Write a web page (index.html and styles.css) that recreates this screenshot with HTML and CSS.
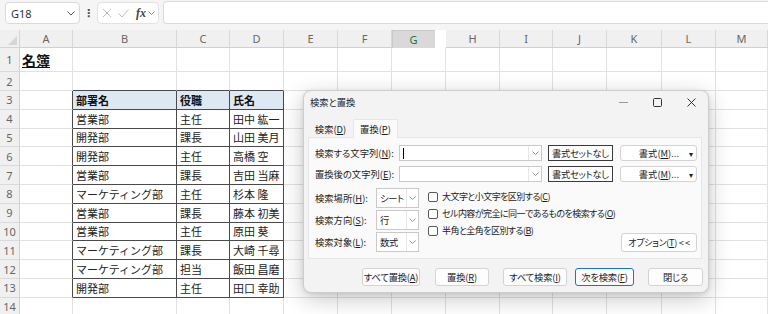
FILE: index.html
```html
<!DOCTYPE html>
<html lang="ja">
<head>
<meta charset="utf-8">
<title>検索と置換</title>
<link rel="stylesheet" href="styles.css">
</head>
<body>
<div class="app">
  <div class="fbar">
    <div class="namebox"><span>G18</span><svg class="chev" width="8" height="5" viewBox="0 0 8 5"><path d="M0.5 0.5L4 4L7.5 0.5" fill="none" stroke="#555" stroke-width="1"/></svg></div>
    <div class="dots">⋮</div>
    <div class="fxbox">
      <svg width="10" height="10" viewBox="0 0 10 10"><path d="M1 1L9 9M9 1L1 9" stroke="#bdbdbd" stroke-width="1" fill="none"/></svg>
      <svg width="11" height="9" viewBox="0 0 11 9"><path d="M0.5 4.5L4 8L10.5 0.5" stroke="#bdbdbd" stroke-width="1" fill="none"/></svg>
      <span class="fx">fx</span>
      <svg width="7" height="5" viewBox="0 0 7 5"><path d="M0.5 0.5L3.5 3.5L6.5 0.5" fill="none" stroke="#888" stroke-width="1"/></svg>
    </div>
    <div class="finput"></div>
  </div>

  <div class="sheet">
    <div class="corner"><svg width="9" height="9" viewBox="0 0 9 9"><path d="M9 0V9H0Z" fill="#d6d6d6"/></svg></div>
    <div class="ch">A</div><div class="ch">B</div><div class="ch">C</div><div class="ch">D</div><div class="ch">E</div><div class="ch">F</div><div class="ch sel">G</div><div class="ch">H</div><div class="ch">I</div><div class="ch">J</div><div class="ch">K</div><div class="ch">L</div><div class="ch">M</div>

    <div class="rh">1</div><div class="ttl">名簿</div><div></div><div></div><div></div><div></div><div></div><div></div><div></div><div></div><div></div><div></div><div></div><div></div>

    <div class="rh">2</div><div></div><div class="tt"></div><div class="tt"></div><div class="tt"></div><div></div><div></div><div></div><div></div><div></div><div></div><div></div><div></div><div></div>

    <div class="rh">3</div><div class="tl"></div><div class="t h">部署名</div><div class="t h">役職</div><div class="t h">氏名</div><div></div><div></div><div></div><div></div><div></div><div></div><div></div><div></div><div></div>

    <div class="rh">4</div><div class="tl"></div><div class="t">営業部</div><div class="t">主任</div><div class="t">田中 紘一</div><div></div><div></div><div></div><div></div><div></div><div></div><div></div><div></div><div></div>

    <div class="rh">5</div><div class="tl"></div><div class="t">開発部</div><div class="t">課長</div><div class="t">山田 美月</div><div></div><div></div><div></div><div></div><div></div><div></div><div></div><div></div><div></div>

    <div class="rh">6</div><div class="tl"></div><div class="t">開発部</div><div class="t">主任</div><div class="t">高橋 空</div><div></div><div></div><div></div><div></div><div></div><div></div><div></div><div></div><div></div>

    <div class="rh">7</div><div class="tl"></div><div class="t">営業部</div><div class="t">課長</div><div class="t">吉田 当麻</div><div></div><div></div><div></div><div></div><div></div><div></div><div></div><div></div><div></div>

    <div class="rh">8</div><div class="tl"></div><div class="t">マーケティング部</div><div class="t">主任</div><div class="t">杉本 隆</div><div></div><div></div><div></div><div></div><div></div><div></div><div></div><div></div><div></div>

    <div class="rh">9</div><div class="tl"></div><div class="t">営業部</div><div class="t">課長</div><div class="t">藤本 初美</div><div></div><div></div><div></div><div></div><div></div><div></div><div></div><div></div><div></div>

    <div class="rh">10</div><div class="tl"></div><div class="t">営業部</div><div class="t">主任</div><div class="t">原田 葵</div><div></div><div></div><div></div><div></div><div></div><div></div><div></div><div></div><div></div>

    <div class="rh">11</div><div class="tl"></div><div class="t">マーケティング部</div><div class="t">課長</div><div class="t">大崎 千尋</div><div></div><div></div><div></div><div></div><div></div><div></div><div></div><div></div><div></div>

    <div class="rh">12</div><div class="tl"></div><div class="t">マーケティング部</div><div class="t">担当</div><div class="t">飯田 昌磨</div><div></div><div></div><div></div><div></div><div></div><div></div><div></div><div></div><div></div>

    <div class="rh">13</div><div class="tl"></div><div class="t">開発部</div><div class="t">主任</div><div class="t">田口 幸助</div><div></div><div></div><div></div><div></div><div></div><div></div><div></div><div></div><div></div>

    <div class="rh">14</div><div></div><div></div><div></div><div></div><div></div><div></div><div></div><div></div><div></div><div></div><div></div><div></div><div></div>
  </div>

  <div class="dialog">
    <div class="titlebar">
      <span class="dtitle">検索と置換</span>
      <div class="winbtn"><svg width="9" height="1" viewBox="0 0 9 1"><rect width="9" height="1" fill="#9a9a9a"/></svg></div>
      <div class="winbtn"><svg width="9" height="9" viewBox="0 0 9 9"><rect x="0.5" y="0.5" width="8" height="8" rx="1" fill="none" stroke="#333" stroke-width="1"/></svg></div>
      <div class="winbtn"><svg width="9" height="9" viewBox="0 0 9 9"><path d="M0.5 0.5L8.5 8.5M8.5 0.5L0.5 8.5" stroke="#333" stroke-width="1" fill="none"/></svg></div>
    </div>
    <div class="tabs">
      <div class="tab">検索(<u>D</u>)</div>
      <div class="tab active">置換(<u>P</u>)</div>
    </div>
    <div class="panel">
      <div class="frow">
        <span class="flabel">検索する文字列(<u>N</u>):</span>
        <div class="combo"><span class="caret"></span><span class="drop"><svg width="7" height="4" viewBox="0 0 7 4"><path d="M0.5 0.5L3.5 3.5L6.5 0.5" fill="none" stroke="#999" stroke-width="1"/></svg></span></div>
        <div class="nofmt">書式セットなし</div>
        <div class="fmt"><span>書式(<u>M</u>)...</span><span class="tri">▾</span></div>
      </div>
      <div class="frow r2">
        <span class="flabel">置換後の文字列(<u>E</u>):</span>
        <div class="combo"><span class="ctext"></span><span class="drop"><svg width="7" height="4" viewBox="0 0 7 4"><path d="M0.5 0.5L3.5 3.5L6.5 0.5" fill="none" stroke="#999" stroke-width="1"/></svg></span></div>
        <div class="nofmt">書式セットなし</div>
        <div class="fmt"><span>書式(<u>M</u>)...</span><span class="tri">▾</span></div>
      </div>
      <div class="lower">
        <div class="selcol">
          <div class="srow"><span class="slabel">検索場所(<u>H</u>):</span><div class="sel"><span class="stext">シート</span><span class="drop"><svg width="7" height="4" viewBox="0 0 7 4"><path d="M0.5 0.5L3.5 3.5L6.5 0.5" fill="none" stroke="#999" stroke-width="1"/></svg></span></div></div>
          <div class="srow"><span class="slabel">検索方向(<u>S</u>):</span><div class="sel"><span class="stext">行</span><span class="drop"><svg width="7" height="4" viewBox="0 0 7 4"><path d="M0.5 0.5L3.5 3.5L6.5 0.5" fill="none" stroke="#999" stroke-width="1"/></svg></span></div></div>
          <div class="srow"><span class="slabel">検索対象(<u>L</u>):</span><div class="sel"><span class="stext">数式</span><span class="drop"><svg width="7" height="4" viewBox="0 0 7 4"><path d="M0.5 0.5L3.5 3.5L6.5 0.5" fill="none" stroke="#999" stroke-width="1"/></svg></span></div></div>
        </div>
        <div class="checks">
          <label class="chk"><span class="box"></span>大文字と小文字を区別する(<u>C</u>)</label>
          <label class="chk"><span class="box"></span>セル内容が完全に同一であるものを検索する(<u>O</u>)</label>
          <label class="chk"><span class="box"></span>半角と全角を区別する(<u>B</u>)</label>
        </div>
        <div class="optbtn">オプション(<u>T</u>)&nbsp;&lt;&nbsp;&lt;</div>
      </div>
    </div>
    <div class="actions">
      <div class="btn b1">すべて置換(<u>A</u>)</div>
      <div class="btn b2">置換(<u>R</u>)</div>
      <div class="btn b3">すべて検索(<u>I</u>)</div>
      <div class="btn b4 focus">次を検索(<u>F</u>)</div>
      <div class="btn b5">閉じる</div>
    </div>
  </div>
</div>
</body>
</html>
```

FILE: styles.css
```css
* { box-sizing: border-box; margin: 0; padding: 0; }

body {
  width: 768px;
  height: 314px;
  overflow: hidden;
  background: #f5f5f5;
  font-family: "Noto Sans CJK JP", "Noto Sans", sans-serif;
  color: #222;
}

.app {
  position: relative;
  width: 768px;
  height: 314px;
  overflow: hidden;
}

/* formula bar */
.fbar {
  height: 30px;
  display: flex;
  align-items: flex-start;
  padding: 2px 0 0 5px;
  background: #f5f5f5;
}
.namebox {
  width: 75px;
  height: 22px;
  background: #fff;
  border: 1px solid #dadada;
  border-radius: 4px;
  display: flex;
  align-items: center;
  justify-content: space-between;
  padding: 0 4px 0 5px;
  font: 11px "Noto Sans", sans-serif;
  color: #333;
}
.dots {
  width: 17px;
  height: 22px;
  display: flex;
  align-items: center;
  justify-content: center;
  font: bold 11px "DejaVu Sans", sans-serif;
  color: #555;
}
.fxbox {
  width: 62px;
  height: 22px;
  background: #fff;
  border: 1px solid #e2e2e2;
  border-radius: 4px;
  display: flex;
  align-items: center;
  padding-left: 4px;
  gap: 6px;
}
.fx {
  font: italic bold 12px "Liberation Serif", serif;
  color: #444;
  margin-left: 1px;
  margin-right: -4px;
}
.finput {
  flex: 1;
  height: 23px;
  margin-left: 4px;
  margin-top: -1px;
  background: #fff;
  border: 1px solid #dadada;
  border-right: none;
  border-radius: 4px 0 0 4px;
}

/* sheet */
.sheet {
  display: grid;
  grid-template-columns: 20px 53px 104px 53px 54px 54px 54px 54px 54px 53px 54px 55px 54px 52px;
  grid-template-rows: 18px 24px 19px repeat(12, 18.8px);
  background: #fff;
}
.sheet > div {
  border-right: 1px solid #e1e1e1;
  border-bottom: 1px solid #e1e1e1;
  background: #fff;
  font-size: 11px;
  display: flex;
  align-items: center;
  padding-left: 3px;
  white-space: nowrap;
  color: #222;
}
.sheet > .corner {
  background: #f0f0f0;
  align-items: flex-end;
  justify-content: flex-end;
  padding: 0 2px 2px 0;
  border-right-color: #d4d4d4;
  border-bottom-color: #d4d4d4;
}
.sheet > .ch {
  background: #f0f0f0;
  justify-content: center;
  padding: 0;
  font: 11px "Noto Sans", sans-serif;
  color: #666;
  border-right-color: #d8d8d8;
  border-bottom-color: #d0d0d0;
}
.sheet > .ch.sel {
  background: #d9d9d9;
  color: #217346;
  border-bottom: 2px solid #217346;
}
.sheet > .rh {
  background: #f0f0f0;
  justify-content: center;
  padding: 0;
  font: 11px "Noto Sans", sans-serif;
  color: #666;
  border-right-color: #d0d0d0;
  border-bottom-color: #dadada;
}
.sheet > .ttl {
  font-size: 14px;
  font-weight: bold;
  text-decoration: underline;
  color: #111;
  padding-left: 2px;
  overflow: visible;
}
.sheet > .tt { border-bottom-color: #4a4a4a; }
.sheet > .tl { border-right-color: #4a4a4a; }
.sheet > .t {
  border-right-color: #4a4a4a;
  border-bottom-color: #4a4a4a;
}
.sheet > .h {
  background: #dde8f3;
  font-weight: bold;
  color: #111;
}

/* dialog */
.dialog {
  position: absolute;
  left: 303px;
  top: 90px;
  width: 406px;
  height: 203px;
  background: #f3f3f3;
  border: 1px solid #cdcdcd;
  border-radius: 8px;
  box-shadow: 0 6px 22px rgba(0, 0, 0, 0.22), 0 1px 4px rgba(0, 0, 0, 0.1);
  font-size: 9.3px;
  font-feature-settings: "palt";
  color: #1b1b1b;
  display: flex;
  flex-direction: column;
}
.titlebar {
  height: 22px;
  display: flex;
  align-items: center;
  padding-left: 6px;
}
.dtitle { flex: 1; }
.winbtn {
  width: 34px;
  height: 22px;
  display: flex;
  align-items: center;
  justify-content: center;
}
.tabs {
  margin-top: 6px;
  padding-left: 4px;
  height: 18px;
  display: flex;
  align-items: flex-end;
}
.tab {
  width: 45px;
  height: 17px;
  display: flex;
  align-items: center;
  justify-content: center;
}
.tab.active {
  height: 19px;
  background: #fafafa;
  border: 1px solid #e6e6e6;
  border-bottom: none;
  border-radius: 2px 2px 0 0;
  position: relative;
  z-index: 1;
  margin-bottom: -1px;
}
.panel {
  margin: 0 6px 0 4px;
  height: 122px;
  background: #fafafa;
  border: 1px solid #e6e6e6;
  padding: 7px 4px 0 6px;
}
.frow {
  height: 16px;
  display: flex;
  align-items: center;
}
.frow.r2 { margin-top: 5px; }
.flabel { width: 84px; white-space: nowrap; }
.combo {
  width: 143px;
  height: 16px;
  background: #fff;
  border: 1px solid #c9c9c9;
  display: flex;
  align-items: center;
}
.caret {
  width: 1px;
  height: 11px;
  background: #000;
  margin-left: 3px;
}
.ctext { flex: 1; }
.combo .caret { margin-right: auto; }
.drop {
  width: 13px;
  height: 100%;
  flex-shrink: 0;
  border-left: 1px solid #e6e6e6;
  display: flex;
  align-items: center;
  justify-content: center;
}
.nofmt {
  width: 65px;
  height: 16px;
  margin-left: 6px;
  border: 1.5px solid #3a3a3a;
  background: #fdfdfd;
  display: flex;
  align-items: center;
  justify-content: center;
  white-space: nowrap;
  letter-spacing: -0.3px;
}
.fmt {
  width: 77px;
  height: 16px;
  margin-left: 7px;
  border: 1px solid #d3d3d3;
  border-radius: 3px;
  background: #fff;
  display: flex;
  align-items: center;
  justify-content: flex-end;
  padding-right: 3px;
  white-space: nowrap;
}
.fmt .tri { margin-left: 10px; font-size: 8px; color: #222; }

.lower {
  margin-top: 6px;
  display: flex;
}
.selcol {
  display: flex;
  flex-direction: column;
  gap: 2px;
  flex-shrink: 0;
}
.srow {
  height: 20px;
  display: flex;
  align-items: center;
}
.slabel { width: 61px; white-space: nowrap; }
.sel {
  width: 43px;
  height: 20px;
  background: #fff;
  border: 1px solid #c9c9c9;
  display: flex;
  align-items: center;
}
.stext {
  flex: 1;
  padding-left: 3px;
  white-space: nowrap;
  overflow: hidden;
  letter-spacing: -0.3px;
}
.sel .drop { width: 12px; }
.checks {
  margin-left: 9px;
  display: flex;
  flex-direction: column;
  font-size: 9px;
  letter-spacing: -0.55px;
}
.chk {
  height: 17px;
  display: flex;
  align-items: center;
  white-space: nowrap;
}
.box {
  width: 10px;
  height: 10px;
  border: 1px solid #5a5a5a;
  border-radius: 2px;
  background: #fff;
  margin-right: 4px;
  flex-shrink: 0;
}
.optbtn {
  margin-left: auto;
  align-self: flex-end;
  width: 76px;
  height: 19px;
  flex-shrink: 0;
  border: 1px solid #d3d3d3;
  border-radius: 3px;
  background: #fff;
  display: flex;
  align-items: center;
  justify-content: center;
  white-space: nowrap;
  font-size: 9px;
  letter-spacing: -0.3px;
}

.actions {
  margin-top: 9px;
  display: flex;
  justify-content: flex-end;
  padding-right: 5px;
}
.btn {
  height: 18px;
  border: 1px solid #d3d3d3;
  border-radius: 3px;
  background: #fdfdfd;
  display: flex;
  align-items: center;
  justify-content: center;
  white-space: nowrap;
  letter-spacing: -0.2px;
}
.btn.b1 { width: 58px; }
.btn.b2 { width: 54px; margin-left: 15px; }
.btn.b3 { width: 64px; margin-left: 14px; }
.btn.b4 { width: 59px; margin-left: 8px; }
.btn.b5 { width: 55px; margin-left: 14px; }
.btn.focus { border-color: #1a73c8; }
```
